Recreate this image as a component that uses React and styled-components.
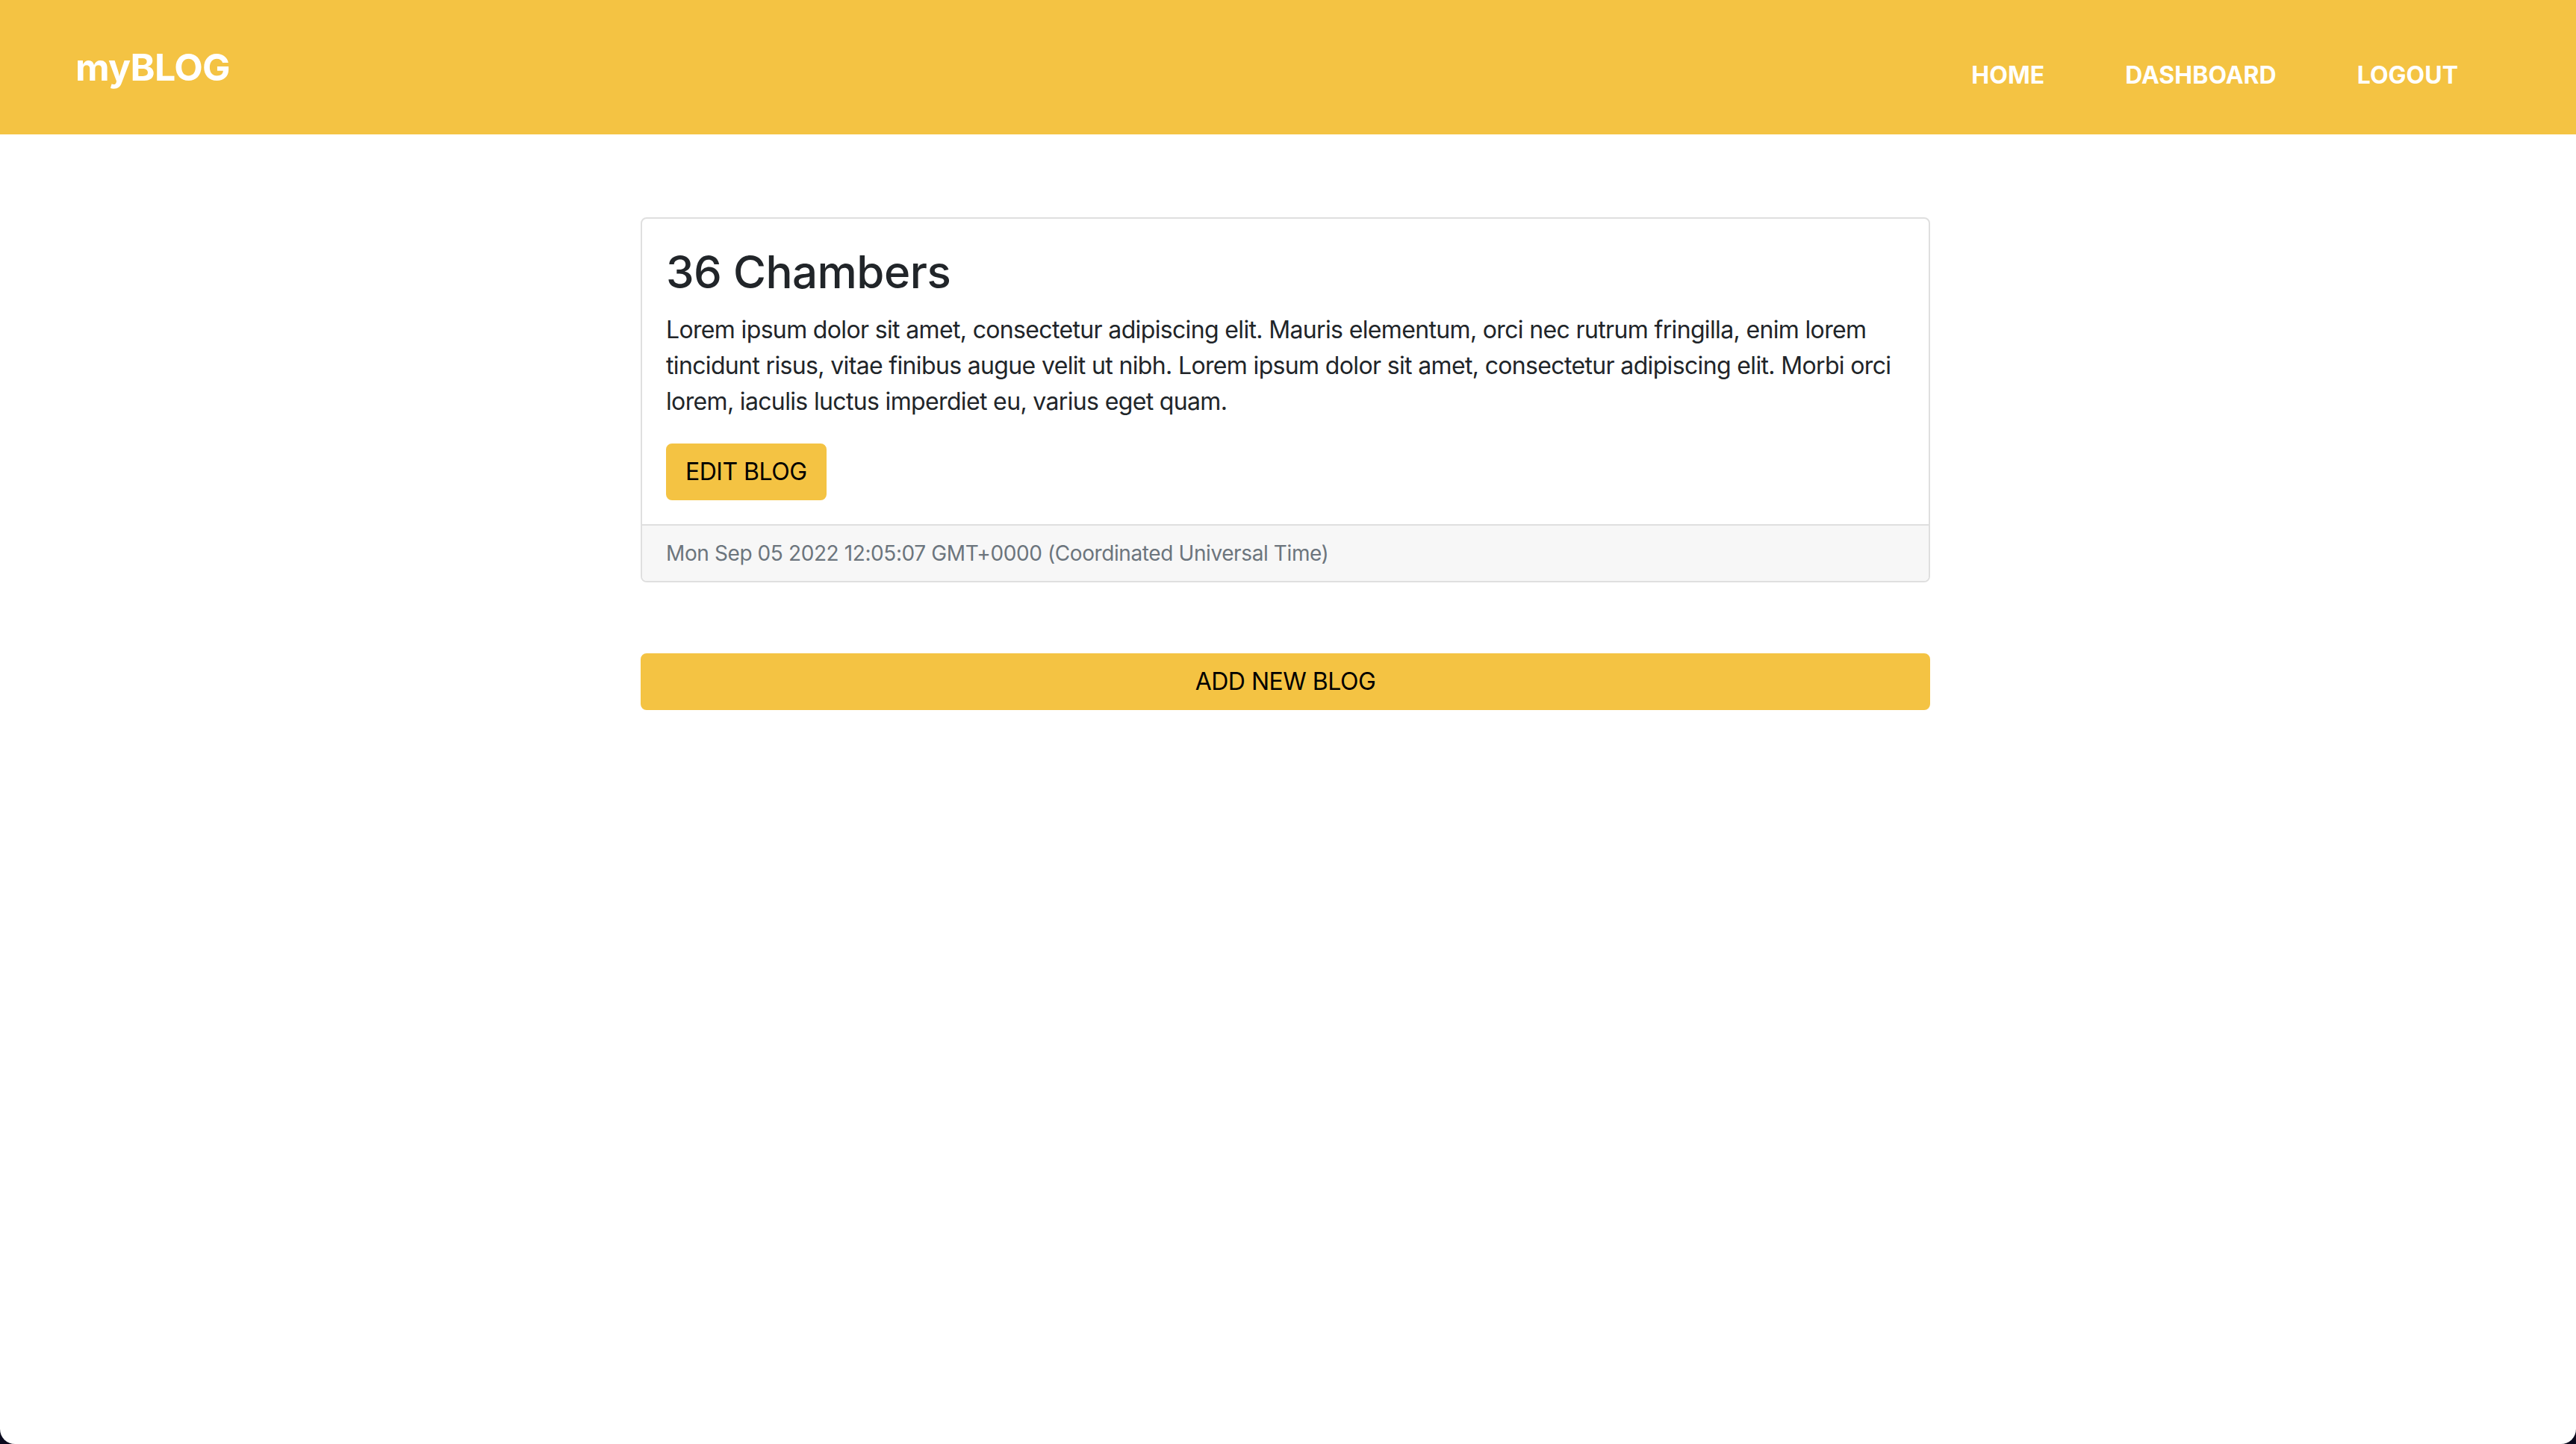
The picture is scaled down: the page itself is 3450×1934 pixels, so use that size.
import React from 'react'
import styled, { createGlobalStyle } from 'styled-components'

const GlobalStyle = createGlobalStyle`
	html, body {
		margin: 0;
		padding: 0;
		background: #0b0b1e;
	}
	body {
		font-family: Inter, "Noto Sans", sans-serif;
		color: #212529;
	}
	* {
		box-sizing: border-box;
	}
`

const Page = styled.div`
	min-height: 100vh;
	background: #fff;
	border-radius: 0 0 20px 20px;
	overflow: hidden;
`

const Navbar = styled.header`
	display: flex;
	align-items: center;
	justify-content: space-between;
	height: 180px;
	padding: 0 158px 0 101px;
	background-color: #f4c343;
`

const Brand = styled.a`
	font-size: 50px;
	font-weight: 700;
	color: #fff;
	text-decoration: none;
	letter-spacing: -0.7px;
`

const NavLinks = styled.nav`
	display: flex;
	gap: 108px;
	padding-top: 20px;
`

const NavLink = styled.a`
	font-size: 32px;
	font-weight: 700;
	color: #fff;
	text-decoration: none;
	text-transform: uppercase;
`

const Main = styled.main`
	width: 1727px;
	margin-left: calc(50% - 867px);
	padding-top: 111px;
	display: flex;
	flex-direction: column;
	gap: 95px;
`

const Card = styled.article`
	border: 2px solid #dfdfdf;
	border-radius: 8px;
	overflow: hidden;
	background: #fff;
`

const CardBody = styled.div`
	padding: 35px 32px 32px;
`

const CardTitle = styled.h2`
	margin: 0 0 18px;
	font-size: 60px;
	font-weight: 500;
	line-height: 1.2;
	color: #212529;
	letter-spacing: -0.5px;
`

const CardText = styled.p`
	margin: 0 0 32px;
	font-size: 32px;
	line-height: 48px;
	letter-spacing: -0.65px;
`

const CardFooter = styled.div`
	padding: 16px 32px;
	background: #f7f7f7;
	border-top: 2px solid #dfdfdf;
	font-size: 28px;
	line-height: 42px;
	color: #6c757d;
	letter-spacing: -0.4px;
`

const Button = styled.button`
	display: ${p => (p.$block ? 'block' : 'inline-block')};
	width: ${p => (p.$block ? '100%' : 'auto')};
	padding: 12px 24px;
	font-family: inherit;
	font-size: 32px;
	line-height: 48px;
	color: #000;
	background-color: #f4c343;
	border: 2px solid #f4c343;
	border-radius: 8px;
	text-transform: uppercase;
	cursor: pointer;
	letter-spacing: -0.5px;
`

const App = () => {
	return (
		<Page>
			<GlobalStyle />
			<Navbar>
				<Brand href="#">myBLOG</Brand>
				<NavLinks>
					<NavLink href="#">Home</NavLink>
					<NavLink href="#">Dashboard</NavLink>
					<NavLink href="#">Logout</NavLink>
				</NavLinks>
			</Navbar>
			<Main>
				<Card>
					<CardBody>
						<CardTitle>36 Chambers</CardTitle>
						<CardText>
							Lorem ipsum dolor sit amet, consectetur adipiscing elit. Mauris elementum, orci nec rutrum fringilla, enim lorem tincidunt risus, vitae finibus augue velit ut nibh. Lorem ipsum dolor sit amet, consectetur adipiscing elit. Morbi orci lorem, iaculis luctus imperdiet eu, varius eget quam.
						</CardText>
						<Button>Edit Blog</Button>
					</CardBody>
					<CardFooter>
						Mon Sep 05 2022 12:05:07 GMT+0000 (Coordinated Universal Time)
					</CardFooter>
				</Card>
				<Button $block>Add New Blog</Button>
			</Main>
		</Page>
	)
}

export default App
